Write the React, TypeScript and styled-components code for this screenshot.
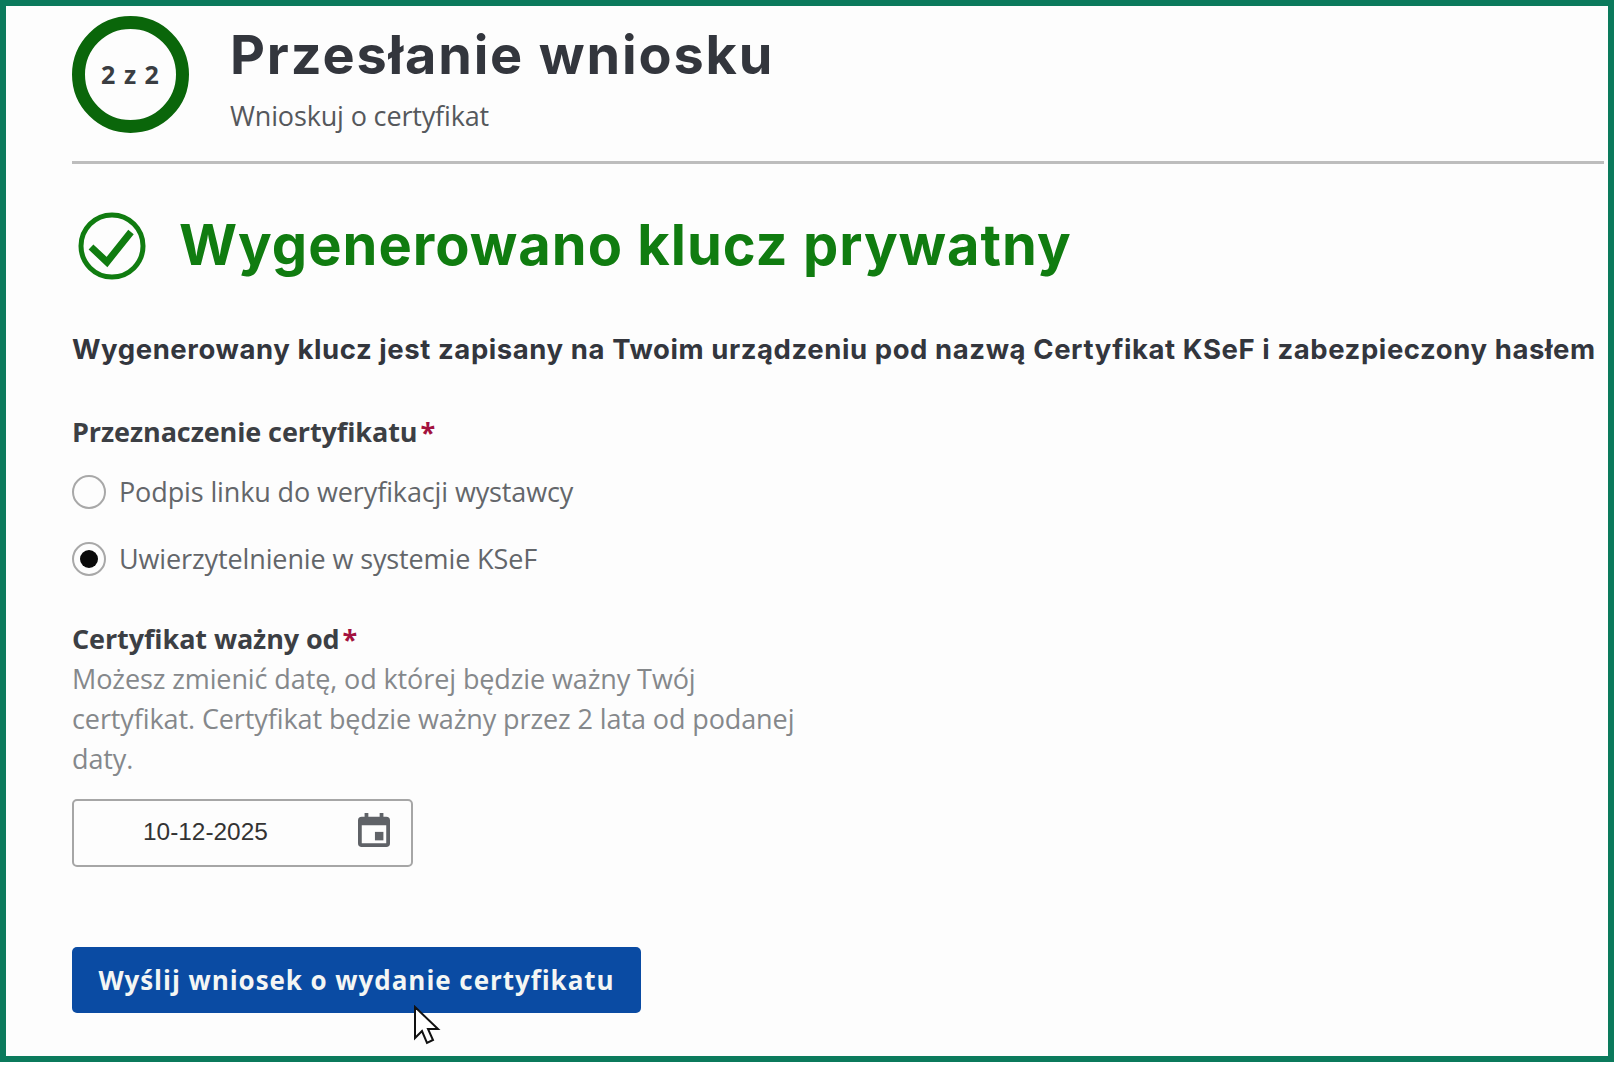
import React from "react";
import styled, { createGlobalStyle } from "styled-components";

const GlobalStyle = createGlobalStyle`
  html, body {
    margin: 0;
    padding: 0;
    background: #fff;
  }
`;

const Frame = styled.div`
  position: relative;
  box-sizing: border-box;
  width: 1614px;
  height: 1062px;
  border: 6px solid #0b7a5c;
  background: #fdfdfd;
  padding: 10px 4px 0 66px;
  overflow: hidden;
  font-family: "Open Sans", "Noto Sans", sans-serif;
`;

const Header = styled.header`
  display: flex;
  align-items: flex-start;
  gap: 41px;
  height: 145px;
  border-bottom: 3px solid #bdbdbd;
`;

const StepRing = styled.div`
  box-sizing: border-box;
  width: 117px;
  height: 117px;
  padding-bottom: 2px;
  border: 13px solid #0a660a;
  border-radius: 50%;
  display: flex;
  align-items: center;
  justify-content: center;
  font-size: 25px;
  font-weight: 700;
  color: #3a3d42;
  letter-spacing: 1px;
  white-space: nowrap;
`;

const HeaderText = styled.div`
  display: flex;
  flex-direction: column;
`;

const PageTitle = styled.h1`
  margin: 8px 0 0;
  font-family: Inter, sans-serif;
  font-size: 54px;
  line-height: 62px;
  font-weight: 700;
  letter-spacing: 1.85px;
  color: #33363d;
`;

const PageSubtitle = styled.div`
  margin-top: 12px;
  font-size: 27px;
  line-height: 36px;
  color: #55585c;
  letter-spacing: -0.15px;
`;

const StatusRow = styled.div`
  display: flex;
  align-items: center;
  gap: 33px;
  margin: 47px 0 0 6px;
  height: 70px;
`;

const StatusTitle = styled.h2`
  margin: -2px 0 0;
  font-family: Inter, sans-serif;
  font-size: 56px;
  line-height: 70px;
  font-weight: 700;
  letter-spacing: 1px;
  color: #107c10;
`;

const Lead = styled.p`
  margin: 48px 0 0;
  font-family: Inter, sans-serif;
  font-size: 27.5px;
  line-height: 40px;
  font-weight: 700;
  letter-spacing: 0.58px;
  color: #33363d;
  white-space: nowrap;
`;

const FieldLabel = styled.div<{ $top: number }>`
  margin-top: ${(p) => p.$top}px;
  font-size: 27px;
  line-height: 40px;
  font-weight: 700;
  color: #3c3f44;
  letter-spacing: -0.1px;
`;

const Required = styled.span`
  margin-left: 3px;
  color: #a3123f;
`;

const RadioRow = styled.label<{ $top: number }>`
  display: flex;
  align-items: center;
  gap: 13px;
  height: 40px;
  margin-top: ${(p) => p.$top}px;
  font-size: 27px;
  color: #63666a;
  letter-spacing: -0.12px;
`;

const RadioText = styled.span`
  margin-top: -2px;
`;

const RadioMark = styled.span<{ $checked?: boolean }>`
  box-sizing: border-box;
  width: 34px;
  height: 34px;
  border: 2px solid #a8a8a8;
  border-radius: 50%;
  display: flex;
  align-items: center;
  justify-content: center;

  &::after {
    content: "";
    display: ${(p) => (p.$checked ? "block" : "none")};
    width: 18px;
    height: 18px;
    border-radius: 50%;
    background: #0a0a0a;
  }
`;

const HelpText = styled.div`
  width: 735px;
  font-size: 27px;
  line-height: 40px;
  color: #85888b;
  letter-spacing: -0.1px;
`;

const DateBox = styled.div`
  box-sizing: border-box;
  display: flex;
  align-items: center;
  width: 341px;
  height: 68px;
  margin-top: 20px;
  padding: 0 21px 0 69px;
  border: 2px solid #a6a6a6;
  border-radius: 5px;
  font-family: "Liberation Sans", Arial, sans-serif;
  font-size: 24.4px;
  color: #333;
`;

const DateValue = styled.span`
  flex: 1;
  margin-top: -3px;
`;

const CalendarSvg = styled.svg`
  margin-top: -7px;
`;

const SubmitButton = styled.button`
  display: block;
  width: 569px;
  height: 66px;
  margin-top: 80px;
  padding: 0;
  border: 0;
  border-radius: 5px;
  background: #0a4ba3;
  color: #f4f6f4;
  font-family: "Open Sans", "Noto Sans", sans-serif;
  font-size: 26px;
  font-weight: 700;
  letter-spacing: 0.95px;
`;

const Cursor = styled.svg`
  position: absolute;
  left: 407px;
  top: 999px;
`;

function CheckBadge() {
  return (
    <svg width="68" height="68" viewBox="0 0 68 68" fill="none" stroke="#107c10" strokeWidth="5">
      <circle cx="34" cy="34" r="31" />
      <path d="M13 35 L29 50 L53 20" strokeWidth="7" />
    </svg>
  );
}

function CalendarIcon() {
  return (
    <CalendarSvg width="32" height="34" viewBox="0 0 34 36" fill="#5f6267">
      <path d="M7 0h4v4h12V0h4v4h3a4 4 0 0 1 4 4v24a4 4 0 0 1-4 4H4a4 4 0 0 1-4-4V8a4 4 0 0 1 4-4h3zM4 13v19h26V13z" />
      <rect x="18" y="20" width="9" height="9" />
    </CalendarSvg>
  );
}

export default function App() {
  return (
    <>
      <GlobalStyle />
      <Frame>
        <Header>
          <StepRing>2 z 2</StepRing>
          <HeaderText>
            <PageTitle>Przesłanie wniosku</PageTitle>
            <PageSubtitle>Wnioskuj o certyfikat</PageSubtitle>
          </HeaderText>
        </Header>
        <StatusRow>
          <CheckBadge />
          <StatusTitle>Wygenerowano klucz prywatny</StatusTitle>
        </StatusRow>
        <Lead>Wygenerowany klucz jest zapisany na Twoim urządzeniu pod nazwą Certyfikat KSeF i zabezpieczony hasłem</Lead>
        <FieldLabel $top={43}>
          Przeznaczenie certyfikatu<Required>*</Required>
        </FieldLabel>
        <RadioRow $top={20}>
          <RadioMark />
          <RadioText>Podpis linku do weryfikacji wystawcy</RadioText>
        </RadioRow>
        <RadioRow $top={27}>
          <RadioMark $checked />
          <RadioText>Uwierzytelnienie w systemie KSeF</RadioText>
        </RadioRow>
        <FieldLabel $top={40}>
          Certyfikat ważny od<Required>*</Required>
        </FieldLabel>
        <HelpText>
          Możesz zmienić datę, od której będzie ważny Twój certyfikat. Certyfikat będzie ważny przez 2 lata od podanej daty.
        </HelpText>
        <DateBox>
          <DateValue>10-12-2025</DateValue>
          <CalendarIcon />
        </DateBox>
        <SubmitButton>Wyślij wniosek o wydanie certyfikatu</SubmitButton>
        <Cursor width="28" height="42" viewBox="0 0 28 42">
          <path d="M2 2 V33 L9 26 L14 38 L20 35 L15 24 L25 24 Z" fill="#fff" stroke="#111" strokeWidth="2" strokeLinejoin="miter" />
        </Cursor>
      </Frame>
    </>
  );
}
